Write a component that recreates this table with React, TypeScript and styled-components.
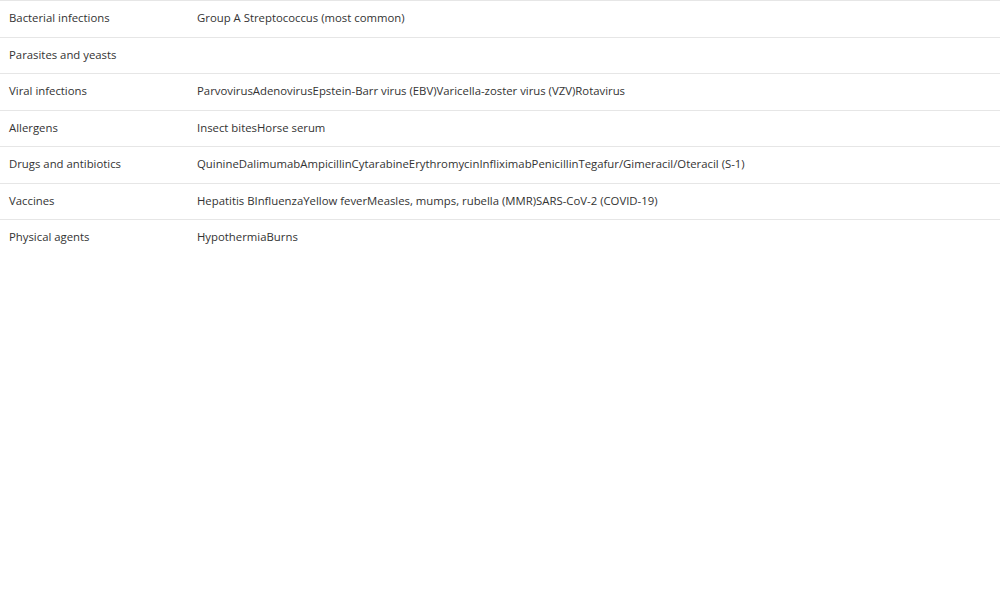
import React from "react";
import styled, { createGlobalStyle } from "styled-components";

const Global = createGlobalStyle`
  html, body { margin: 0; padding: 0; background: #fff; }
  body { font-family: "Open Sans", "Liberation Sans", sans-serif; }
`;

const Table = styled.table`
  width: 100%;
  border-collapse: collapse;
  font-family: "Open Sans", "Liberation Sans", sans-serif;
  font-size: 11.35px;
  color: #333;
`;

const Row = styled.tr`
  border-top: 1px solid #e6e6e6;
`;

const Cell = styled.td<{ $first?: boolean }>`
  padding: 9px 9px 11px;
  line-height: 15.5px;
  height: 15.5px;
  vertical-align: top;
  width: ${(p) => (p.$first ? "170px" : "auto")};
`;

const rows: [string, string[]][] = [
  ["Bacterial infections", ["Group A Streptococcus (most common)"]],
  ["Parasites and yeasts", []],
  ["Viral infections", ["Parvovirus", "Adenovirus", "Epstein-Barr virus (EBV)", "Varicella-zoster virus (VZV)", "Rotavirus"]],
  ["Allergens", ["Insect bites", "Horse serum"]],
  ["Drugs and antibiotics", ["Quinine", "Dalimumab", "Ampicillin", "Cytarabine", "Erythromycin", "Infliximab", "Penicillin", "Tegafur/Gimeracil/Oteracil (S-1)"]],
  ["Vaccines", ["Hepatitis B", "Influenza", "Yellow fever", "Measles, mumps, rubella (MMR)", "SARS-CoV-2 (COVID-19)"]],
  ["Physical agents", ["Hypothermia", "Burns"]],
];

export default function App() {
  return (
    <>
      <Global />
      <Table>
        <tbody>
          {rows.map(([k, v]) => (
            <Row key={k}>
              <Cell $first>{k}</Cell>
              <Cell>{v.map((x) => <span key={x}>{x}</span>)}</Cell>
            </Row>
          ))}
        </tbody>
      </Table>
    </>
  );
}
